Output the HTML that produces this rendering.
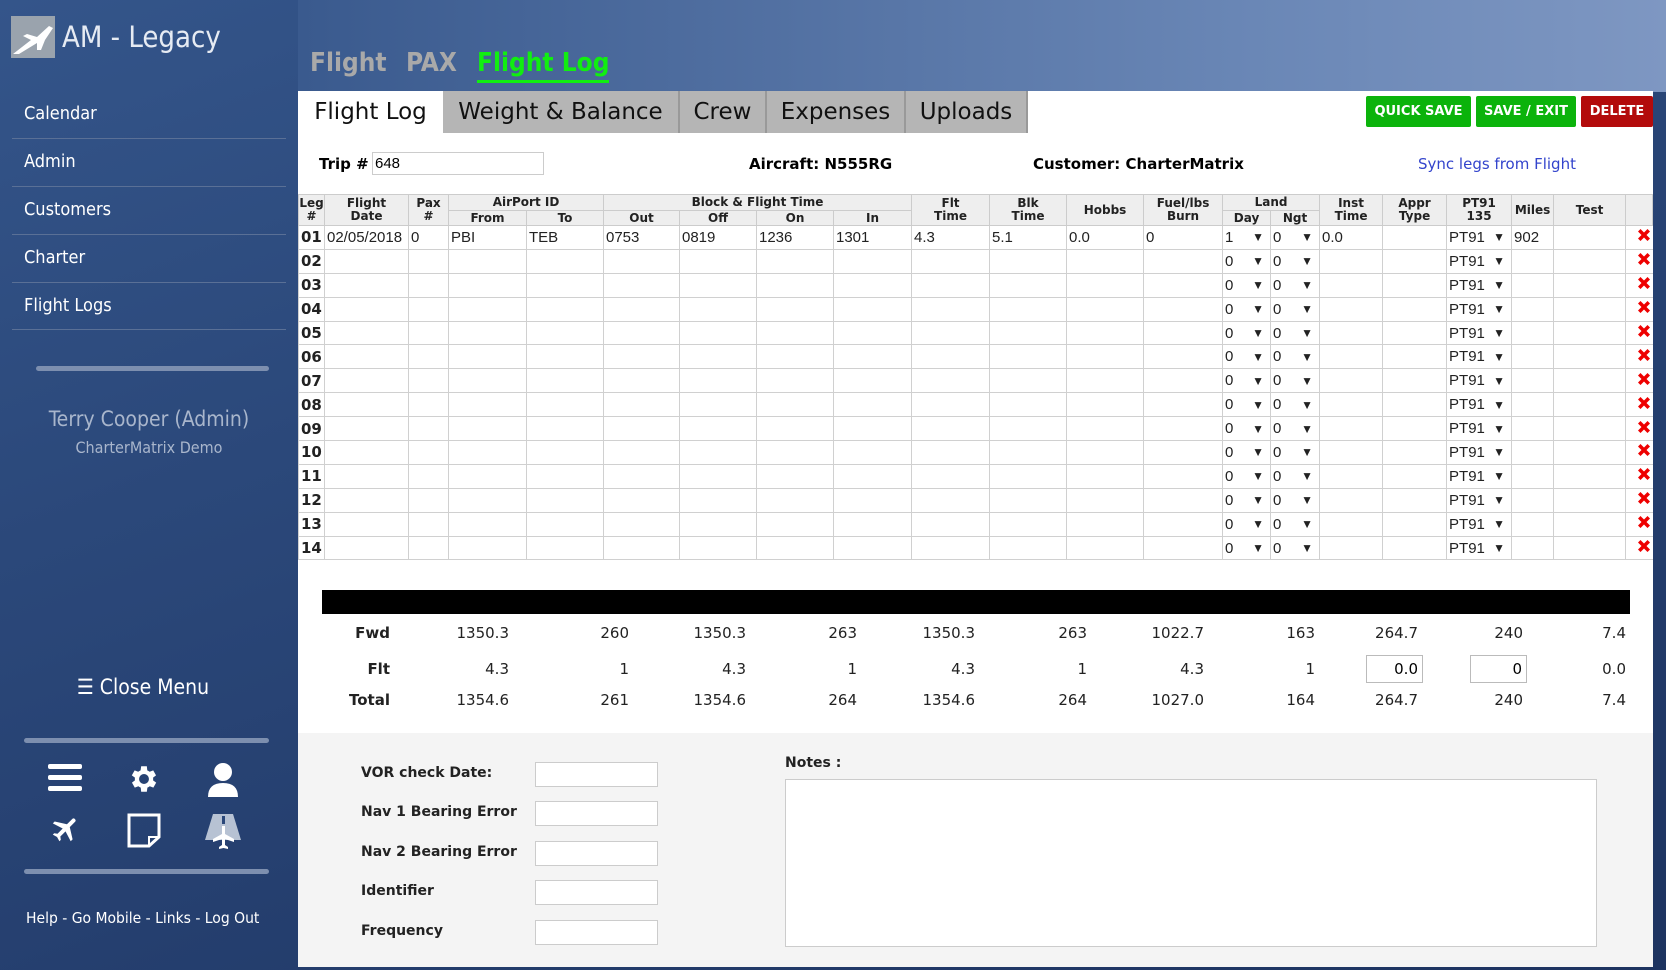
<!DOCTYPE html>
<html><head><meta charset="utf-8"><style>
*{box-sizing:border-box;margin:0;padding:0}
body{width:1666px;height:970px;overflow:hidden;position:relative;font-family:"Liberation Sans",sans-serif;
background:linear-gradient(160deg,#34558a 0%,#2b487a 35%,#1d3360 100%);}
.topbg{position:absolute;left:298px;top:0;width:1368px;height:92px;background:linear-gradient(90deg,#3a5a8e,#6a87b6 70%,#7e97c2);}
.abs{position:absolute}
.side{font-family:"DejaVu Sans Condensed","DejaVu Sans",sans-serif;color:#fff}
.menu{position:absolute;left:24px;font-size:18px;color:#fff;font-family:"DejaVu Sans Condensed","DejaVu Sans",sans-serif}
.div{position:absolute;left:12px;width:274px;height:1px;background:#5a7096}
.bar{position:absolute;left:24px;width:245px;height:5px;border-radius:3px;background:#7d8faf}
.panel{position:absolute;left:298px;top:133px;width:1355px;height:834px;background:#fff}
.tab{position:absolute;top:91px;height:42px;background:#b5b5b5;font-size:23px;color:#111;text-align:center;line-height:43px;font-family:"DejaVu Sans",sans-serif;border-right:2px solid #999}
.btn{position:absolute;top:96px;height:31px;color:#fff;font:bold 13px "DejaVu Sans",sans-serif;text-align:center;line-height:31px;border-radius:2px}
table.g{position:absolute;left:298px;top:194px;width:1355px;border-collapse:collapse;table-layout:fixed}
table.g th{background:#eee;border:1px solid #ccc;font:bold 12px "DejaVu Sans",sans-serif;line-height:13px;color:#222;padding:0}
table.g td{border:1px solid #d0d0d0;height:23.9px;font-size:15px;color:#222;padding:0 2px;white-space:nowrap;overflow:hidden}
td.l{font:bold 15px "DejaVu Sans",sans-serif}
.sel{display:flex;justify-content:space-between;padding-right:4px;align-items:center}
.sel span:last-child{font-size:12px}
.x{text-align:right;border-right:none!important;padding-right:1px!important}
.tot{position:absolute;font:15px "DejaVu Sans",sans-serif;color:#222;text-align:right;width:100px}
.lab{position:absolute;left:361px;font:bold 14px "DejaVu Sans",sans-serif;color:#222}
.inp{position:absolute;left:535px;width:123px;height:25px;background:#fff;border:1px solid #ccc}
</style></head><body>
<svg width="0" height="0" style="position:absolute"><symbol id="rx" viewBox="0 0 16 16"><path d="M2 4.5L4.5 2 8 5.5 11.5 2 14 4.5 10.5 8 14 11.5 11.5 14 8 10.5 4.5 14 2 11.5 5.5 8Z" fill="#e00"/></symbol></svg>
<div class="topbg"></div>
<svg class="abs" style="left:11px;top:16px" width="44" height="42" viewBox="0 0 44 42"><rect width="44" height="42" fill="#9aa3ad"/><path d="M2 38 L20 24 L12 20 L16 18 L26 21 L38 10 L42 12 L34 24 L30 34 L26 34 L26 27 L8 38Z" fill="#fff"/></svg>
<div class="abs side" style="left:62px;top:20px;font-size:29px;color:#e6ebf3">AM - Legacy</div>
<div class="abs" style="left:310px;top:48px;font:bold 26px 'DejaVu Sans Condensed','DejaVu Sans',sans-serif;color:#a9a9a9">Flight</div>
<div class="abs" style="left:406px;top:48px;font:bold 26px 'DejaVu Sans Condensed','DejaVu Sans',sans-serif;color:#a9a9a9">PAX</div>
<div class="abs" style="left:477px;top:46px;font:bold 26px 'DejaVu Sans Condensed','DejaVu Sans',sans-serif;color:#11ee11;border-bottom:3px solid #11ee11;line-height:34px">Flight Log</div>

<div class="menu" style="top:103px">Calendar</div><div class="div" style="top:138px"></div>
<div class="menu" style="top:151px">Admin</div><div class="div" style="top:186px"></div>
<div class="menu" style="top:199px">Customers</div><div class="div" style="top:234px"></div>
<div class="menu" style="top:247px">Charter</div><div class="div" style="top:282px"></div>
<div class="menu" style="top:295px">Flight Logs</div><div class="div" style="top:329px"></div>
<div class="bar" style="top:366px;left:36px;width:233px"></div>
<div class="abs side" style="left:0;width:298px;text-align:center;top:407px;font-size:21px;color:#a9b6cc">Terry Cooper (Admin)</div>
<div class="abs side" style="left:0;width:298px;text-align:center;top:438px;font-size:16px;color:#a9b6cc">CharterMatrix Demo</div>
<div class="abs side" style="left:0;width:286px;text-align:center;top:675px;font-size:21px">☰ Close Menu</div>
<div class="bar" style="top:738px"></div>
<svg class="abs" style="left:48px;top:764px" width="34" height="28"><rect x="0" y="0" width="34" height="5" rx="2" fill="#fff"/><rect x="0" y="11" width="34" height="5" rx="2" fill="#fff"/><rect x="0" y="22" width="34" height="5" rx="2" fill="#fff"/></svg>
<svg class="abs" style="left:127px;top:762px" width="34" height="34" viewBox="0 0 24 24"><path fill="#fff" d="M19.4 13a7.5 7.5 0 0 0 0-2l2.1-1.6-2-3.5-2.5 1a7 7 0 0 0-1.7-1L15 3h-4l-.4 2.9a7 7 0 0 0-1.7 1l-2.5-1-2 3.5L6.6 11a7.5 7.5 0 0 0 0 2l-2.1 1.6 2 3.5 2.5-1a7 7 0 0 0 1.7 1L11 21h4l.4-2.9a7 7 0 0 0 1.7-1l2.5 1 2-3.5zM13 15.5a3.5 3.5 0 1 1 0-7 3.5 3.5 0 0 1 0 7z" transform="translate(-1 0)"/></svg>
<svg class="abs" style="left:206px;top:762px" width="34" height="36" viewBox="0 0 34 36"><circle cx="17" cy="10" r="9" fill="#fff"/><path d="M2 35 Q2 21 17 21 Q32 21 32 35Z" fill="#fff"/></svg>
<svg class="abs" style="left:50px;top:813px" width="32" height="32" viewBox="0 0 24 24"><path fill="#fff" d="M21 16v-2l-8-5V3.5a1.5 1.5 0 0 0-3 0V9l-8 5v2l8-2.5V19l-2 1.5V22l3.5-1 3.5 1v-1.5L13 19v-5.5z" transform="rotate(45 12 12)"/></svg>
<svg class="abs" style="left:127px;top:813px" width="34" height="35" viewBox="0 0 34 35"><path d="M2 2H32V24L22 33H2Z" fill="none" stroke="#fff" stroke-width="3"/><path d="M22 33V24H32" fill="none" stroke="#fff" stroke-width="2"/></svg>
<svg class="abs" style="left:203px;top:812px" width="40" height="40" viewBox="0 0 40 40"><path d="M10 2H30L38 28H2Z" fill="#b7c2d3"/><rect x="19" y="4" width="3" height="8" fill="#2b487a"/><path fill="#fff" d="M19 14h3v8l9 5v3l-9-3v6l3 2v2l-4.5-1-4.5 1v-2l3-2v-6l-9 3v-3l9-5z"/></svg>
<div class="bar" style="top:869px"></div>
<div class="abs side" style="left:26px;top:909px;font-size:15.5px">Help - Go Mobile - Links - Log Out</div>

<div class="panel"></div>
<div class="abs" style="left:298px;top:733px;width:1355px;height:234px;background:#f4f4f4"></div>
<div class="tab" style="left:298px;width:145px;background:#fff;border-right:none">Flight Log</div>
<div class="tab" style="left:443px;width:237px">Weight &amp; Balance</div>
<div class="tab" style="left:680px;width:87px">Crew</div>
<div class="tab" style="left:767px;width:139px">Expenses</div>
<div class="tab" style="left:906px;width:122px">Uploads</div>
<div class="abs" style="left:1028px;top:91px;width:625px;height:42px;background:#fff"></div>
<div class="btn" style="left:1366px;width:105px;background:#0bb30b">QUICK SAVE</div>
<div class="btn" style="left:1476px;width:100px;background:#0bb30b">SAVE / EXIT</div>
<div class="btn" style="left:1581px;width:72px;background:#b30b0b">DELETE</div>

<div class="abs" style="left:319px;top:155px;font:bold 15px 'DejaVu Sans',sans-serif">Trip #</div>
<div class="abs" style="left:372px;top:152px;width:172px;height:23px;border:1px solid #ccc;font-size:15px;padding:2px 2px">648</div>
<div class="abs" style="left:749px;top:155px;font:bold 15px 'DejaVu Sans',sans-serif">Aircraft: N555RG</div>
<div class="abs" style="left:1033px;top:155px;font:bold 15px 'DejaVu Sans',sans-serif">Customer: CharterMatrix</div>
<div class="abs" style="left:1418px;top:155px;font:15px 'DejaVu Sans',sans-serif;color:#3344cc">Sync legs from Flight</div>

<table class="g">
<colgroup><col style="width:26px"><col style="width:84px"><col style="width:40px"><col style="width:78px"><col style="width:77px"><col style="width:76px"><col style="width:77px"><col style="width:77px"><col style="width:78px"><col style="width:78px"><col style="width:77px"><col style="width:77px"><col style="width:79px"><col style="width:48px"><col style="width:49px"><col style="width:63px"><col style="width:64px"><col style="width:65px"><col style="width:42px"><col style="width:72px"><col style="width:27px"></colgroup>
<tr style="height:16px"><th rowspan="2">Leg<br>#</th><th rowspan="2">Flight<br>Date</th><th rowspan="2">Pax<br>#</th><th colspan="2">AirPort ID</th><th colspan="4">Block &amp; Flight Time</th><th rowspan="2">Flt<br>Time</th><th rowspan="2">Blk<br>Time</th><th rowspan="2">Hobbs</th><th rowspan="2">Fuel/lbs<br>Burn</th><th colspan="2">Land</th><th rowspan="2">Inst<br>Time</th><th rowspan="2">Appr<br>Type</th><th rowspan="2">PT91<br>135</th><th rowspan="2">Miles</th><th rowspan="2">Test</th><th rowspan="2"></th></tr>
<tr style="height:15px"><th>From</th><th>To</th><th>Out</th><th>Off</th><th>On</th><th>In</th><th>Day</th><th>Ngt</th></tr>
<tr><td class="l">01</td><td>02/05/2018</td><td>0</td><td>PBI</td><td>TEB</td><td>0753</td><td>0819</td><td>1236</td><td>1301</td><td>4.3</td><td>5.1</td><td>0.0</td><td>0</td><td><div class="sel"><span>1</span><span>▼</span></div></td><td><div class="sel"><span>0</span><span>▼</span></div></td><td>0.0</td><td></td><td><div class="sel"><span>PT91</span><span>▼</span></div></td><td>902</td><td></td><td class="x"><svg width="16" height="16"><use href="#rx"/></svg></td></tr>
<tr><td class="l">02</td><td></td><td></td><td></td><td></td><td></td><td></td><td></td><td></td><td></td><td></td><td></td><td></td><td><div class="sel"><span>0</span><span>▼</span></div></td><td><div class="sel"><span>0</span><span>▼</span></div></td><td></td><td></td><td><div class="sel"><span>PT91</span><span>▼</span></div></td><td></td><td></td><td class="x"><svg width="16" height="16"><use href="#rx"/></svg></td></tr>
<tr><td class="l">03</td><td></td><td></td><td></td><td></td><td></td><td></td><td></td><td></td><td></td><td></td><td></td><td></td><td><div class="sel"><span>0</span><span>▼</span></div></td><td><div class="sel"><span>0</span><span>▼</span></div></td><td></td><td></td><td><div class="sel"><span>PT91</span><span>▼</span></div></td><td></td><td></td><td class="x"><svg width="16" height="16"><use href="#rx"/></svg></td></tr>
<tr><td class="l">04</td><td></td><td></td><td></td><td></td><td></td><td></td><td></td><td></td><td></td><td></td><td></td><td></td><td><div class="sel"><span>0</span><span>▼</span></div></td><td><div class="sel"><span>0</span><span>▼</span></div></td><td></td><td></td><td><div class="sel"><span>PT91</span><span>▼</span></div></td><td></td><td></td><td class="x"><svg width="16" height="16"><use href="#rx"/></svg></td></tr>
<tr><td class="l">05</td><td></td><td></td><td></td><td></td><td></td><td></td><td></td><td></td><td></td><td></td><td></td><td></td><td><div class="sel"><span>0</span><span>▼</span></div></td><td><div class="sel"><span>0</span><span>▼</span></div></td><td></td><td></td><td><div class="sel"><span>PT91</span><span>▼</span></div></td><td></td><td></td><td class="x"><svg width="16" height="16"><use href="#rx"/></svg></td></tr>
<tr><td class="l">06</td><td></td><td></td><td></td><td></td><td></td><td></td><td></td><td></td><td></td><td></td><td></td><td></td><td><div class="sel"><span>0</span><span>▼</span></div></td><td><div class="sel"><span>0</span><span>▼</span></div></td><td></td><td></td><td><div class="sel"><span>PT91</span><span>▼</span></div></td><td></td><td></td><td class="x"><svg width="16" height="16"><use href="#rx"/></svg></td></tr>
<tr><td class="l">07</td><td></td><td></td><td></td><td></td><td></td><td></td><td></td><td></td><td></td><td></td><td></td><td></td><td><div class="sel"><span>0</span><span>▼</span></div></td><td><div class="sel"><span>0</span><span>▼</span></div></td><td></td><td></td><td><div class="sel"><span>PT91</span><span>▼</span></div></td><td></td><td></td><td class="x"><svg width="16" height="16"><use href="#rx"/></svg></td></tr>
<tr><td class="l">08</td><td></td><td></td><td></td><td></td><td></td><td></td><td></td><td></td><td></td><td></td><td></td><td></td><td><div class="sel"><span>0</span><span>▼</span></div></td><td><div class="sel"><span>0</span><span>▼</span></div></td><td></td><td></td><td><div class="sel"><span>PT91</span><span>▼</span></div></td><td></td><td></td><td class="x"><svg width="16" height="16"><use href="#rx"/></svg></td></tr>
<tr><td class="l">09</td><td></td><td></td><td></td><td></td><td></td><td></td><td></td><td></td><td></td><td></td><td></td><td></td><td><div class="sel"><span>0</span><span>▼</span></div></td><td><div class="sel"><span>0</span><span>▼</span></div></td><td></td><td></td><td><div class="sel"><span>PT91</span><span>▼</span></div></td><td></td><td></td><td class="x"><svg width="16" height="16"><use href="#rx"/></svg></td></tr>
<tr><td class="l">10</td><td></td><td></td><td></td><td></td><td></td><td></td><td></td><td></td><td></td><td></td><td></td><td></td><td><div class="sel"><span>0</span><span>▼</span></div></td><td><div class="sel"><span>0</span><span>▼</span></div></td><td></td><td></td><td><div class="sel"><span>PT91</span><span>▼</span></div></td><td></td><td></td><td class="x"><svg width="16" height="16"><use href="#rx"/></svg></td></tr>
<tr><td class="l">11</td><td></td><td></td><td></td><td></td><td></td><td></td><td></td><td></td><td></td><td></td><td></td><td></td><td><div class="sel"><span>0</span><span>▼</span></div></td><td><div class="sel"><span>0</span><span>▼</span></div></td><td></td><td></td><td><div class="sel"><span>PT91</span><span>▼</span></div></td><td></td><td></td><td class="x"><svg width="16" height="16"><use href="#rx"/></svg></td></tr>
<tr><td class="l">12</td><td></td><td></td><td></td><td></td><td></td><td></td><td></td><td></td><td></td><td></td><td></td><td></td><td><div class="sel"><span>0</span><span>▼</span></div></td><td><div class="sel"><span>0</span><span>▼</span></div></td><td></td><td></td><td><div class="sel"><span>PT91</span><span>▼</span></div></td><td></td><td></td><td class="x"><svg width="16" height="16"><use href="#rx"/></svg></td></tr>
<tr><td class="l">13</td><td></td><td></td><td></td><td></td><td></td><td></td><td></td><td></td><td></td><td></td><td></td><td></td><td><div class="sel"><span>0</span><span>▼</span></div></td><td><div class="sel"><span>0</span><span>▼</span></div></td><td></td><td></td><td><div class="sel"><span>PT91</span><span>▼</span></div></td><td></td><td></td><td class="x"><svg width="16" height="16"><use href="#rx"/></svg></td></tr>
<tr><td class="l">14</td><td></td><td></td><td></td><td></td><td></td><td></td><td></td><td></td><td></td><td></td><td></td><td></td><td><div class="sel"><span>0</span><span>▼</span></div></td><td><div class="sel"><span>0</span><span>▼</span></div></td><td></td><td></td><td><div class="sel"><span>PT91</span><span>▼</span></div></td><td></td><td></td><td class="x"><svg width="16" height="16"><use href="#rx"/></svg></td></tr>
</table>

<div class="abs" style="left:322px;top:590px;width:1308px;height:24px;background:#000"></div>
<div class="tot" style="left:290px;top:624px;font-weight:bold">Fwd</div>
<div class="tot" style="left:290px;top:660px;font-weight:bold">Flt</div>
<div class="tot" style="left:290px;top:691px;font-weight:bold">Total</div>
<div class="tot" style="left:409px;top:624px">1350.3</div><div class="tot" style="left:409px;top:660px">4.3</div><div class="tot" style="left:409px;top:691px">1354.6</div>
<div class="tot" style="left:529px;top:624px">260</div><div class="tot" style="left:529px;top:660px">1</div><div class="tot" style="left:529px;top:691px">261</div>
<div class="tot" style="left:646px;top:624px">1350.3</div><div class="tot" style="left:646px;top:660px">4.3</div><div class="tot" style="left:646px;top:691px">1354.6</div>
<div class="tot" style="left:757px;top:624px">263</div><div class="tot" style="left:757px;top:660px">1</div><div class="tot" style="left:757px;top:691px">264</div>
<div class="tot" style="left:875px;top:624px">1350.3</div><div class="tot" style="left:875px;top:660px">4.3</div><div class="tot" style="left:875px;top:691px">1354.6</div>
<div class="tot" style="left:987px;top:624px">263</div><div class="tot" style="left:987px;top:660px">1</div><div class="tot" style="left:987px;top:691px">264</div>
<div class="tot" style="left:1104px;top:624px">1022.7</div><div class="tot" style="left:1104px;top:660px">4.3</div><div class="tot" style="left:1104px;top:691px">1027.0</div>
<div class="tot" style="left:1215px;top:624px">163</div><div class="tot" style="left:1215px;top:660px">1</div><div class="tot" style="left:1215px;top:691px">164</div>
<div class="tot" style="left:1318px;top:624px">264.7</div><div class="tot" style="left:1318px;top:691px">264.7</div>
<div class="tot" style="left:1423px;top:624px">240</div><div class="tot" style="left:1423px;top:691px">240</div>
<div class="tot" style="left:1526px;top:624px">7.4</div><div class="tot" style="left:1526px;top:660px">0.0</div><div class="tot" style="left:1526px;top:691px">7.4</div>
<div class="abs" style="left:1366px;top:655px;width:57px;height:28px;border:1px solid #bbb;background:#fff;font:15px 'DejaVu Sans',sans-serif;text-align:right;padding:4px 4px">0.0</div>
<div class="abs" style="left:1470px;top:655px;width:57px;height:28px;border:1px solid #bbb;background:#fff;font:15px 'DejaVu Sans',sans-serif;text-align:right;padding:4px 4px">0</div>

<div class="lab" style="top:765px">VOR check Date:</div><div class="inp" style="top:762px"></div>
<div class="lab" style="top:804px">Nav 1 Bearing Error</div><div class="inp" style="top:801px"></div>
<div class="lab" style="top:844px">Nav 2 Bearing Error</div><div class="inp" style="top:841px"></div>
<div class="lab" style="top:883px">Identifier</div><div class="inp" style="top:880px"></div>
<div class="lab" style="top:923px">Frequency</div><div class="inp" style="top:920px"></div>
<div class="abs" style="left:785px;top:755px;font:bold 14px 'DejaVu Sans',sans-serif;color:#222">Notes :</div>
<div class="abs" style="left:785px;top:779px;width:812px;height:168px;background:#fff;border:1px solid #ccc"></div>
</body></html>
